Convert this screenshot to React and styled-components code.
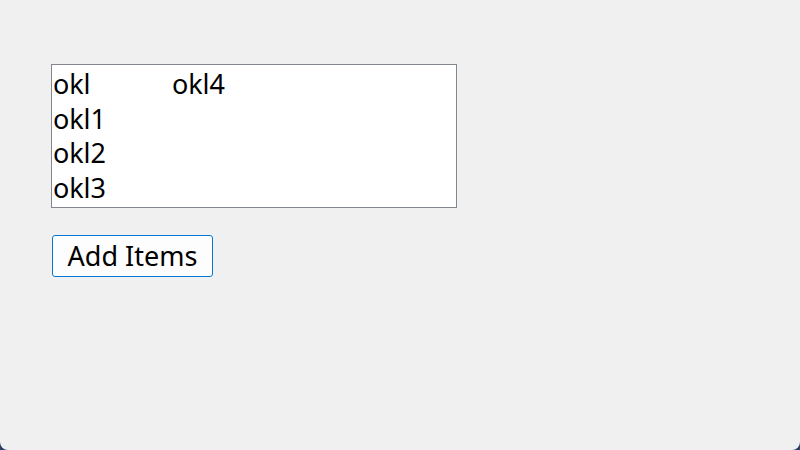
import React from 'react';
import styled, { createGlobalStyle } from 'styled-components';

const GlobalStyle = createGlobalStyle`
  html, body {
    margin: 0;
    padding: 0;
    background: #2d3d6b;
  }
`;

const Window = styled.div`
  width: 800px;
  height: 450px;
  box-sizing: border-box;
  background: #f0f0f0;
  border-radius: 0 0 8px 8px;
  padding: 64px 0 0 51px;
  font-family: "Noto Sans", "Open Sans", sans-serif;
  color: #000;
  display: flex;
  flex-direction: column;
  align-items: flex-start;
  gap: 27px;
`;

const ListBox = styled.div`
  width: 406px;
  height: 144px;
  box-sizing: border-box;
  border: 1px solid #828790;
  background: #fff;
  padding: 2px 0 0 1px;
  display: grid;
  grid-auto-flow: column;
  grid-template-rows: repeat(4, 34.7px);
  grid-auto-columns: 119px;
  overflow: hidden;
`;

const Item = styled.div`
  font-size: 27px;
  line-height: 34.7px;
  white-space: nowrap;
  letter-spacing: -0.1px;
`;

const Button = styled.button`
  width: 161px;
  height: 42px;
  margin-left: 1px;
  border: 1px solid #0078d7;
  border-radius: 3px;
  background: #fdfdfd;
  font-family: inherit;
  font-size: 27px;
  letter-spacing: 0;
  color: #000;
  padding: 0 0 2px;
  line-height: 1;
`;

const items = ['okl', 'okl1', 'okl2', 'okl3', 'okl4'];

export default function App() {
  return (
    <>
      <GlobalStyle />
      <Window>
        <ListBox>
          {items.map((it) => (
            <Item key={it}>{it}</Item>
          ))}
        </ListBox>
        <Button>Add Items</Button>
      </Window>
    </>
  );
}
